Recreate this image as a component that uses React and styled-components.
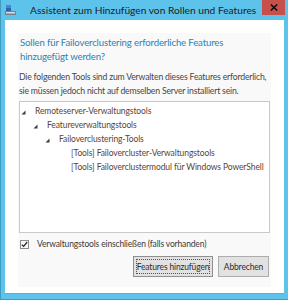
import React from "react";
import styled, { createGlobalStyle } from "styled-components";

const GlobalStyle = createGlobalStyle`
  html, body {
    margin: 0;
    padding: 0;
    background: #5ec3ea;
  }
  body {
    font-family: Lato, "Open Sans", sans-serif;
  }
`;

const Window = styled.div`
  width: 288px;
  height: 300px;
  box-sizing: border-box;
  background: #5ec3ea;
  border-left: 1px solid #3c9cc0;
  border-bottom: 1px solid #3c9cc0;
  display: flex;
  flex-direction: column;
  padding: 0 4px 5px 4px;
  overflow: hidden;
`;

const TitleBar = styled.div`
  height: 20px;
  display: flex;
  align-items: center;
  flex-shrink: 0;
  position: relative;
`;

const AppIcon = styled.svg`
  width: 11px;
  height: 11px;
  margin-right: 14px;
  margin-top: 1px;
`;

const TitleText = styled.span`
  font-size: 10.2px;
  color: #1b1b1b;
  white-space: nowrap;
`;

const CloseButton = styled.div`
  position: absolute;
  top: 0;
  right: -1px;
  width: 23px;
  height: 15px;
  background: #c7504a;
  display: flex;
  align-items: center;
  justify-content: center;
`;

const Client = styled.div`
  flex: 1;
  min-width: 0;
  background: #ffffff;
  border-bottom: 1px solid #9a9a9a;
  padding: 13px 13px 6px 13px;
  display: flex;
`;

const Panel = styled.div`
  flex: 1;
  min-width: 0;
  overflow: hidden;
  background: #f9f9f9;
  padding: 0 1px;
  display: flex;
  flex-direction: column;
`;

const Heading = styled.div`
  color: #2c82b6;
  font-size: 9.6px;
  line-height: 14px;
  padding: 3px 0 0 1px;
  letter-spacing: -0.15px;
  white-space: nowrap;
`;

const Description = styled.div`
  color: #474747;
  font-size: 8.7px;
  line-height: 14px;
  margin-top: 6px;
  letter-spacing: -0.2px;
  white-space: nowrap;
`;

const TreeBox = styled.div`
  margin-top: 3px;
  height: 132px;
  box-sizing: border-box;
  border: 1px solid #c9c9c9;
  background: #ffffff;
  padding: 2px 0 0 0;
  display: flex;
  flex-direction: column;
  overflow: hidden;
`;

const TreeRow = styled.div`
  height: 14px;
  display: flex;
  align-items: center;
  padding-left: ${(p) => 1 + p.$level * 12}px;
  font-size: 8.5px;
  color: #5e4330;
  white-space: nowrap;
  letter-spacing: -0.1px;
`;

const Expander = styled.svg`
  width: 5px;
  height: 5px;
  margin-right: 9px;
  margin-top: 2px;
  flex-shrink: 0;
`;

const CheckRow = styled.label`
  display: flex;
  align-items: center;
  margin-top: 6px;
  padding-left: 1px;
  font-size: 8.5px;
  color: #3a3a3a;
  letter-spacing: -0.15px;
  white-space: nowrap;
`;

const CheckBox = styled.span`
  width: 7px;
  height: 7px;
  border: 1px solid #8c8c8c;
  background: #f6f6f6;
  margin-right: 8px;
  display: flex;
  align-items: center;
  justify-content: center;
`;

const ButtonRow = styled.div`
  display: flex;
  justify-content: flex-end;
  gap: 5px;
  margin-top: 7px;
  padding-right: 1px;
`;

const Button = styled.div`
  width: ${(p) => p.$width}px;
  height: 21px;
  box-sizing: border-box;
  background: #e2e2e2;
  border: 1px solid ${(p) => (p.$default ? "#8f8f8f" : "#adadad")};
  display: flex;
  align-items: center;
  justify-content: center;
  font-size: 8.5px;
  color: #2c2c2c;
  white-space: nowrap;
  letter-spacing: -0.15px;
`;

const FocusRing = styled.span`
  align-self: stretch;
  flex: 1;
  margin: 2px;
  border: 1px dotted #555;
  display: flex;
  align-items: center;
  justify-content: center;
`;

const Triangle = () => (
  <Expander viewBox="0 0 5 5">
    <polygon points="4.5,0.5 4.5,4.5 0.5,4.5" fill="#3a3a3a" />
  </Expander>
);

const tree = [
  { level: 0, label: "Remoteserver-Verwaltungstools", expandable: true },
  { level: 1, label: "Featureverwaltungstools", expandable: true },
  { level: 2, label: "Failoverclustering-Tools", expandable: true },
  { level: 3, label: "[Tools] Failovercluster-Verwaltungstools" },
  { level: 3, label: "[Tools] Failoverclustermodul für Windows PowerShell" },
];

export default function App() {
  return (
    <>
      <GlobalStyle />
      <Window>
        <TitleBar>
          <AppIcon viewBox="0 0 11 11">
            <rect x="1" y="0" width="5" height="3" fill="#4a86cf" />
            <rect x="1" y="3" width="5" height="3" fill="#2f63ad" />
            <rect x="0" y="6" width="11" height="4" fill="#77818c" />
            <rect x="1" y="7" width="9" height="1.5" fill="#d5dce3" />
          </AppIcon>
          <TitleText>Assistent zum Hinzufügen von Rollen und Features</TitleText>
          <CloseButton>
            <svg width="8" height="7" viewBox="0 0 8 7">
              <path d="M0.8 0.5 L7.2 6.5 M7.2 0.5 L0.8 6.5" stroke="#111" strokeWidth="1.6" />
            </svg>
          </CloseButton>
        </TitleBar>
        <Client>
          <Panel>
            <Heading>
              Sollen für Failoverclustering erforderliche Features
              <br />
              hinzugefügt werden?
            </Heading>
            <Description>
              Die folgenden Tools sind zum Verwalten dieses Features erforderlich,
              <br />
              sie müssen jedoch nicht auf demselben Server installiert sein.
            </Description>
            <TreeBox>
              {tree.map((item, i) => (
                <TreeRow key={i} $level={item.level}>
                  {item.expandable ? <Triangle /> : <Expander as="span" />}
                  {item.label}
                </TreeRow>
              ))}
            </TreeBox>
            <CheckRow>
              <CheckBox>
                <svg width="7" height="7" viewBox="0 0 7 7">
                  <polyline points="0.8,3.6 2.6,5.4 6.2,1" fill="none" stroke="#222" strokeWidth="1.2" />
                </svg>
              </CheckBox>
              Verwaltungstools einschließen (falls vorhanden)
            </CheckRow>
            <ButtonRow>
              <Button $default $width={80}>
                <FocusRing>Features hinzufügen</FocusRing>
              </Button>
              <Button $width={51}>Abbrechen</Button>
            </ButtonRow>
          </Panel>
        </Client>
      </Window>
    </>
  );
}
